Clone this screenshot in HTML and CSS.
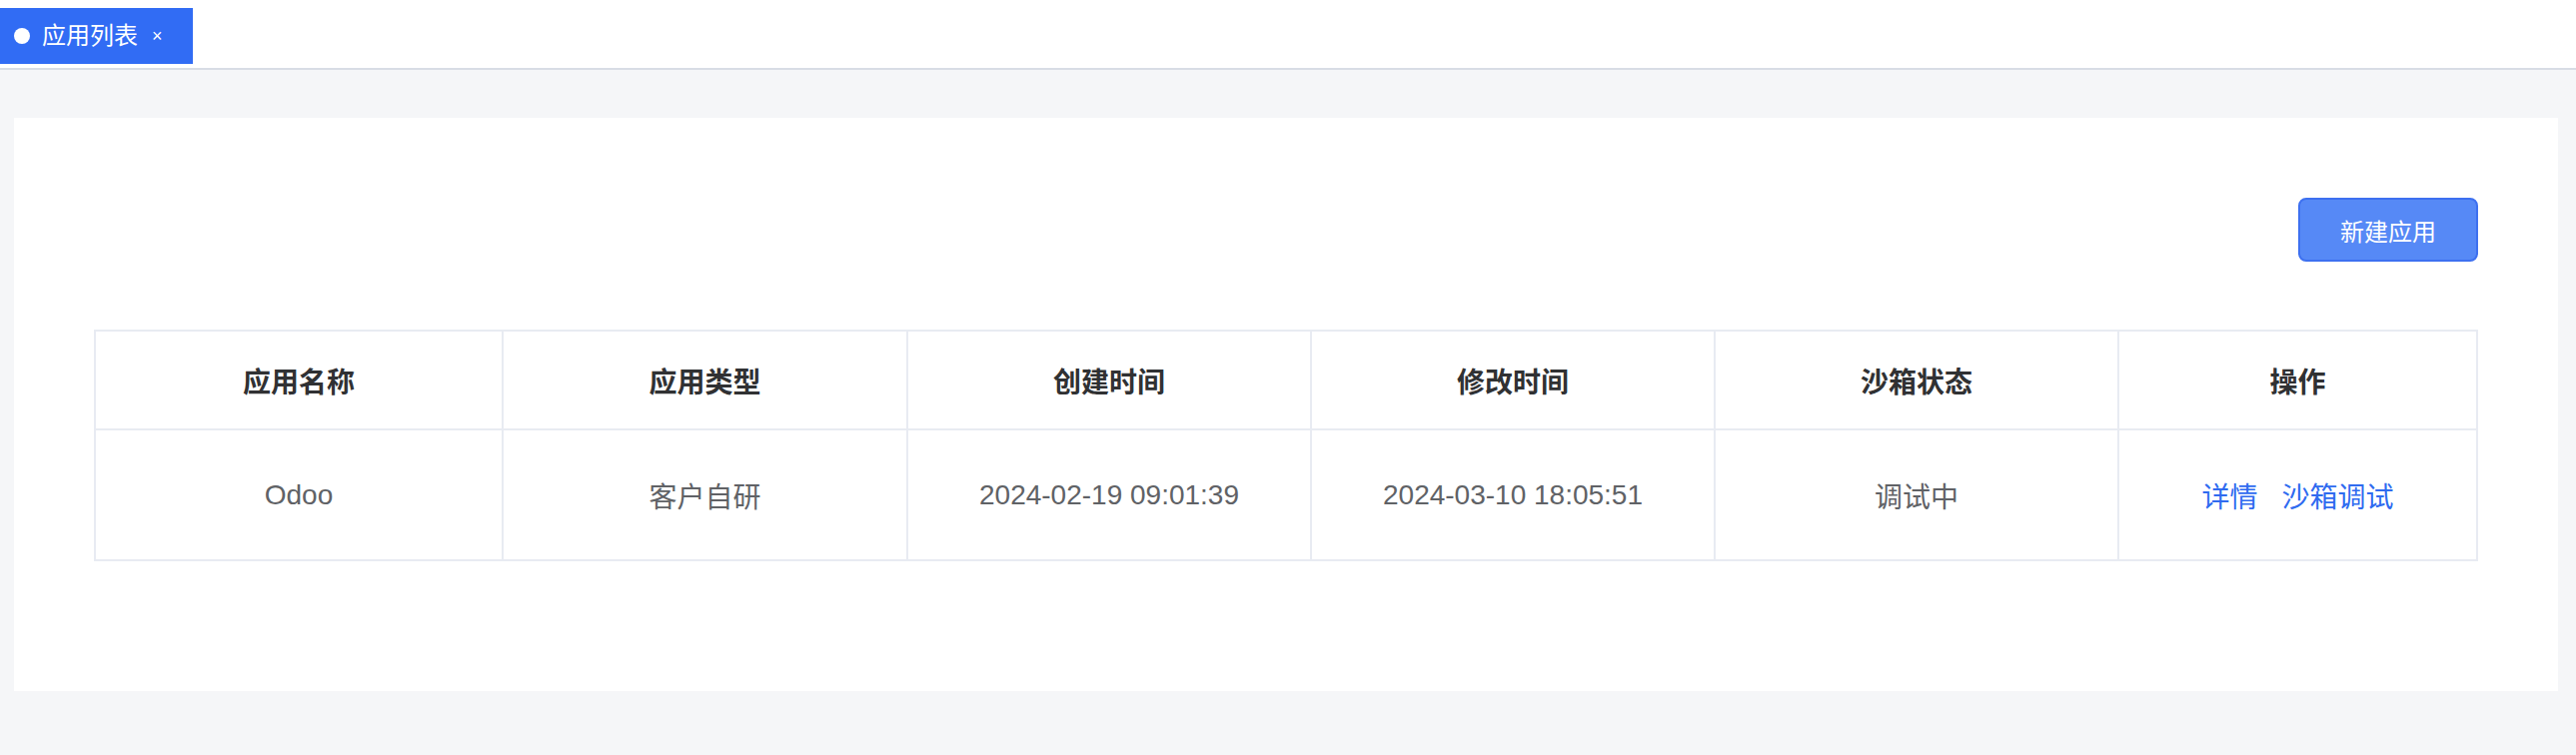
FILE: index.html
```html
<!DOCTYPE html>
<html lang="zh-CN">
<head>
<meta charset="utf-8">
<title>应用列表</title>
<link rel="stylesheet" href="styles.css">
</head>
<body>
<div class="tabbar">
  <div class="tab">
    <span class="tab-dot"></span>
    <span class="tab-label">应用列表</span>
    <span class="tab-close">×</span>
  </div>
</div>
<main class="main">
  <section class="card">
    <div class="toolbar">
      <button class="btn-primary">新建应用</button>
    </div>
    <table class="grid">
      <colgroup>
        <col class="c1"><col class="c2"><col class="c3"><col class="c4"><col class="c5"><col class="c6">
      </colgroup>
      <thead>
        <tr>
          <th>应用名称</th>
          <th>应用类型</th>
          <th>创建时间</th>
          <th>修改时间</th>
          <th>沙箱状态</th>
          <th>操作</th>
        </tr>
      </thead>
      <tbody>
        <tr>
          <td>Odoo</td>
          <td>客户自研</td>
          <td>2024-02-19 09:01:39</td>
          <td>2024-03-10 18:05:51</td>
          <td>调试中</td>
          <td><span class="ops"><a class="link">详情</a><a class="link">沙箱调试</a></span></td>
        </tr>
      </tbody>
    </table>
  </section>
</main>
</body>
</html>
```
FILE: styles.css
```css
* { box-sizing: border-box; }
html, body {
  margin: 0;
  padding: 0;
  background: #f5f6f8;
  font-family: "Liberation Sans", "Noto Sans CJK SC", sans-serif;
}
body { height: 756px; overflow: hidden; }

.tabbar {
  height: 70px;
  background: #ffffff;
  border-bottom: 2px solid #d8dce5;
  padding-top: 8px;
  display: flex;
}
.tab {
  height: 56px;
  width: 193px;
  background: #316cf4;
  color: #ffffff;
  display: flex;
  align-items: center;
  padding-left: 14px;
}
.tab-dot {
  width: 16px;
  height: 16px;
  border-radius: 50%;
  background: #ffffff;
  margin-right: 12px;
  flex: none;
}
.tab-label {
  font-size: 24px;
  line-height: 24px;
}
.tab-close {
  font-size: 18px;
  line-height: 24px;
  margin-left: 14px;
}

.main {
  padding: 48px 18px 0 14px;
}
.card {
  background: #ffffff;
  height: 574px;
  padding: 80px 80px 0 80px;
}
.toolbar {
  display: flex;
  justify-content: flex-end;
  margin-bottom: 68px;
}
.btn-primary {
  width: 180px;
  height: 64px;
  background: #5689f6;
  border: 2px solid #3d70f0;
  border-radius: 8px;
  color: #ffffff;
  font-family: "Liberation Sans", "Noto Sans CJK SC", sans-serif;
  font-size: 24px;
  padding: 0;
}

.grid {
  width: 2384px;
  border-collapse: collapse;
  table-layout: fixed;
}
.c1 { width: 408px; }
.c2 { width: 405px; }
.c3 { width: 404px; }
.c4 { width: 404px; }
.c5 { width: 404px; }
.c6 { width: 359px; }
.grid th, .grid td {
  border: 2px solid #e8ebf2;
  text-align: center;
  padding: 0;
  font-size: 28px;
}
.grid th {
  height: 99px;
  color: #303133;
  font-weight: bold;
}
.grid td {
  height: 131px;
  color: #606266;
}
.ops {
  display: inline-flex;
  gap: 24px;
}
.link {
  color: #2f6bf0;
  cursor: pointer;
}
```
